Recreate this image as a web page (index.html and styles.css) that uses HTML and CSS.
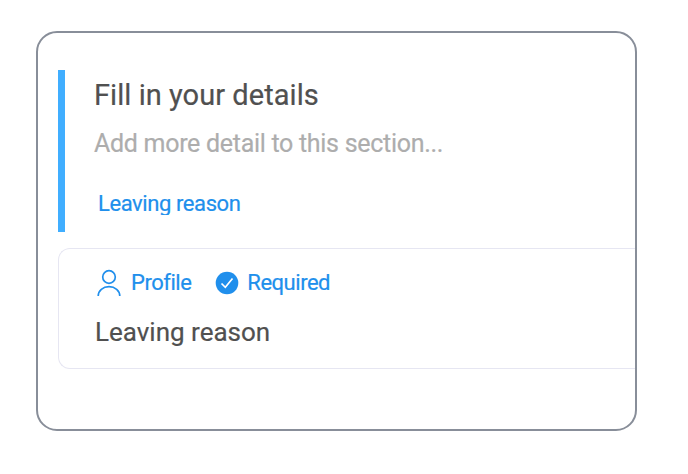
FILE: index.html
```html
<!DOCTYPE html>
<html lang="en">
<head>
<meta charset="utf-8">
<title>Fill in your details</title>
<link rel="stylesheet" href="styles.css">
</head>
<body>
<main class="panel">
  <section class="intro">
    <h1 class="title">Fill in your details</h1>
    <p class="hint">Add more detail to this section...</p>
    <a class="link">Leaving reason</a>
  </section>
  <section class="card">
    <div class="tags">
      <svg class="person" viewBox="0 0 26 28" width="26" height="28"><circle cx="13" cy="8" r="6.300"/><path d="M2.200 27C2.200 21.500 7 17.700 13 17.700S23.800 21.500 23.800 27"/></svg>
      <span class="tag profile">Profile</span>
      <svg class="check" viewBox="0 0 24 24" width="24" height="24"><circle cx="12" cy="12" r="11.300"/><path d="M6.500 12.500L10.300 16.300L17.500 7.500"/></svg>
      <span class="tag required">Required</span>
    </div>
    <h2 class="name">Leaving reason</h2>
  </section>
</main>
</body>
</html>
```
FILE: styles.css
```css
* { box-sizing: border-box; margin: 0; }
body { width: 688px; height: 474px; padding: 31px 0 0 36px; background: #fff; font-family: Roboto, sans-serif; overflow: hidden; -webkit-text-stroke: 0.2px; }
.panel { width: 601px; height: 400px; border: 2px solid #888e99; border-radius: 21px; padding: 37px 0 0 20px; overflow: hidden; }
.intro { height: 162px; border-left: 7px solid #40aeff; padding: 7px 0 0 29px; white-space: nowrap; }
.title { font-size: 29px; letter-spacing: 0.050px; line-height: 36px; font-weight: 400; color: #505050; }
.hint { margin-top: 15px; font-size: 25px; letter-spacing: -0.290px; line-height: 32px; color: #adadad; }
.link { display: block; margin: 30px 0 0 4px; height: 25px; overflow: hidden; font-size: 22px; letter-spacing: -0.410px; line-height: 28px; color: #208fec; }
.card { height: 121px; margin-top: 16px; border: 1.500px solid #e6e6f2; border-right: 0; border-radius: 12px 0 0 12px; padding: 19px 0 0 36px; }
.tags { display: flex; align-items: center; height: 30px; color: #208fec; font-size: 22px; letter-spacing: -0.480px; }
.tag { line-height: 28px; }
.person { margin-left: 1px; fill: none; stroke: #208fec; stroke-width: 1.700; }
.profile { margin-left: 9px; }
.check { margin-left: 24px; fill: #208fec; }
.check path { fill: none; stroke: #fff; stroke-width: 1.700; }
.required { margin-left: 8px; }
.name { margin-top: 18px; font-size: 26px; line-height: 32px; font-weight: 400; color: #505050; }
```
